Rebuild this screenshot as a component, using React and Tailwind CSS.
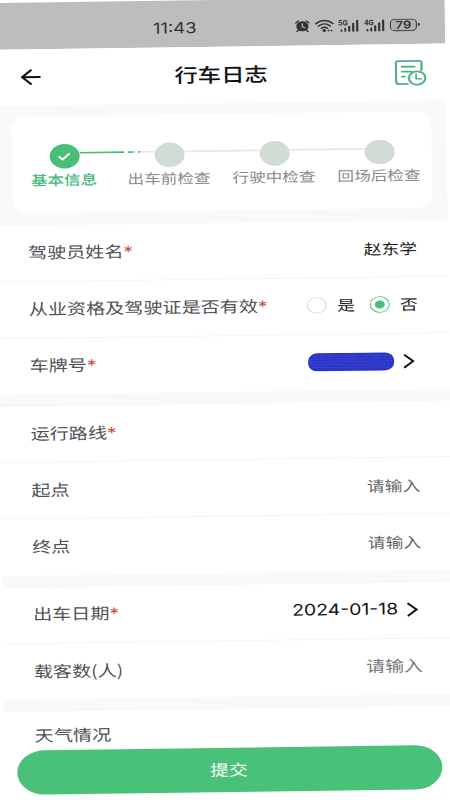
import React, { useState } from 'react';

const steps = ['基本信息', '出车前检查', '行驶中检查', '回场后检查'];

const Chevron = () => (
  <svg width="11" height="19" viewBox="0 0 11 19" fill="none" stroke="#111" strokeWidth="2.2">
    <path d="M0.500 1.5 9.5 9.5 0.500 17.5" />
  </svg>
);

const Signal = ({ label }) => (
  <svg width="21" height="17" viewBox="0 0 21 17" fill="#333">
    <text x="0" y="8.2" fontSize="9" fontWeight="700" fontFamily="Inter, sans-serif" textLength="10" lengthAdjust="spacingAndGlyphs">
      {label}
    </text>
    <rect x="2.5" y="13" width="2" height="3" rx="1" />
    <rect x="6.3" y="11" width="2" height="5" rx="1" />
    <rect x="10.2" y="8.500" width="2.2" height="7.5" rx="1" />
    <rect x="14.2" y="5" width="2.2" height="11" rx="1" />
    <rect x="18.2" y="1.5" width="2.2" height="14.5" rx="1" />
  </svg>
);

const StatusBar = () => (
  <div className="flex h-[57px] items-center bg-[#bdbdbd] pt-[9px] pl-[158px] pr-[25px] text-[#333]">
    <span className="font-[Inter] text-[18.5px] leading-none">11:43</span>
    <div className="ml-auto flex items-center">
      <svg width="15" height="16" viewBox="0 0 15 16" fill="none" stroke="#333" strokeWidth="1.5" strokeLinecap="round">
        <circle cx="7.5" cy="8.5" r="5.4" fill="#333" />
        <path d="M1 4.5 3.5 2M14 4.5 11.5 2M3.5 13 2 15M11.5 13 13 15" />
        <path d="M7.5 5.5V9l2.3 1.5" stroke="#bdbdbd" strokeWidth="1.3" />
      </svg>
      <svg className="ml-[5px]" width="19" height="16" viewBox="0 0 19 16" fill="none" stroke="#333" strokeWidth="1.7" strokeLinecap="round">
        <path d="M1 5.5c5-5 12-5 17 0M3.7 8.5c3.5-3.4 8.1-3.4 11.6 0M6.5 11.3c2-1.8 4-1.8 6 0" />
        <circle cx="9.2" cy="14" r="1" fill="#333" />
        <path d="M13.5 14.2h.1M16.5 14.2h.1" strokeWidth="2" />
      </svg>
      <div className="ml-[4px]"><Signal label="5G" /></div>
      <div className="ml-[5px]"><Signal label="4G" /></div>
      <div className="ml-[5px] flex h-[15px] w-[27px] items-center justify-center rounded-[5px] border border-[#333] bg-[#b0b0b0] font-[Inter] text-[13px] font-semibold leading-none">
        79
      </div>
      <div className="ml-[1px] h-[4px] w-[2px] rounded-r bg-[#333]" />
    </div>
  </div>
);

const Header = () => (
  <div className="flex h-[69px] items-center justify-between bg-white pl-[25px] pr-[19px]">
    <button className="w-[31px] pb-[1px]">
      <svg width="21" height="20" viewBox="0 0 21 20" fill="none" stroke="#111" strokeWidth="2.2">
        <path d="M20 10H1.5M11 1 1.5 10 11 19" />
      </svg>
    </button>
    <h1 className="pr-[4px] pb-[2px] text-[23.3px] font-medium leading-none text-[#111]">行车日志</h1>
    <button>
      <svg width="32" height="32" viewBox="0 0 32 32" fill="none" stroke="#4fb380" strokeWidth="2.2" strokeLinecap="round" strokeLinejoin="round">
        <path d="M27 13V3.5Q27 1.5 25 1.5H3.5Q1.5 1.5 1.5 3.5V27Q1.5 29.5 4 29.5H13" />
        <path d="M7.5 8.5H20M7.5 14.5H17M7.5 20.5H10" />
        <circle cx="22.5" cy="22.5" r="8.2" />
        <path d="M21.5 18V23.5H26.5" strokeWidth="1.8" />
      </svg>
    </button>
  </div>
);

const Stepper = () => (
  <div className="mx-[15px] flex h-[118px] rounded-[16px] bg-white pt-[34px]">
    {steps.map((step, i) => (
      <div key={step} className="flex w-[105px] flex-col items-center">
        <div className="flex w-full items-center">
          <div className="mb-[8px] flex w-[37.5px] justify-end">
            {i > 0 && <div className={`h-[2px] bg-[#e6e8e7] ${i === 1 ? 'w-[13px]' : 'w-full'}`} />}
          </div>
          <div className={`flex size-[30px] shrink-0 items-center justify-center rounded-full ${i === 0 ? 'bg-[#49be78]' : 'bg-[#d1dcd4]'}`}>
            {i === 0 && (
              <svg width="13" height="11" viewBox="0 0 13 11" fill="none" stroke="#fff" strokeWidth="2.2">
                <path d="M1 5 5 9 12 1.5" />
              </svg>
            )}
          </div>
          <div className="mb-[8px] flex w-[37.5px] gap-[3px]">
            {i === 0 && (
              <>
                <div className="h-[2.6px] w-[45px] shrink-0 rounded-r bg-[#49be78]" />
                <div className="h-[2.6px] w-[7px] shrink-0 rounded bg-[#49be78]" />
                <div className="h-[2.6px] w-[3px] shrink-0 rounded bg-[#49be78]" />
              </>
            )}
            {(i === 1 || i === 2) && <div className="h-[2px] w-full bg-[#e6e8e7]" />}
          </div>
        </div>
        <span className={`mt-px -ml-[1px] whitespace-nowrap text-[16.6px] leading-[24px] ${i === 0 ? 'font-medium text-[#49b878]' : 'text-[#8a8a8a]'}`}>
          {step}
        </span>
      </div>
    ))}
  </div>
);

const Row = ({ label, required, children, className = 'pr-[31px]' }) => (
  <div className={`flex h-[68.8px] items-center justify-between border-b border-[#f3f3f3] pl-[30px] pb-[1px] last:border-b-0 ${className}`}>
    <label className="flex whitespace-nowrap text-[19.1px] leading-none text-[#505257]">
      {label}
      {required && <span className="pt-[1px] font-[Inter] text-[19px] leading-none text-[#d0493e]">*</span>}
    </label>
    <div className="flex items-center text-[17.8px] leading-none text-[#1c1c1c]">{children}</div>
  </div>
);

const Radio = ({ checked, onClick }) => (
  <button
    onClick={onClick}
    className={`flex size-[20px] items-center justify-center rounded-full border ${checked ? 'border-[#49be78]' : 'border-[#d6d6d6]'}`}
  >
    {checked && <span className="size-[10px] rounded-full bg-[#49be78]" />}
  </button>
);

const Divider = () => <div className="h-[14px] border-b border-[#f5f5f5] bg-[#f9f9f9]" />;

const App = () => {
  const [valid, setValid] = useState(false);

  return (
    <div className="h-[800px] w-[450px] overflow-hidden bg-white font-['Noto_Sans_CJK_SC',sans-serif]">
      <div className="w-[450px] origin-top-left bg-white [transform:matrix(1,-0.0136,0.0115,0.82,-5.5,3)]">
        <StatusBar />
        <Header />

        <div className="bg-[#f9f9f9] pt-[13px] pb-[15px]">
          <Stepper />
        </div>

        <section>
          <Row label="驾驶员姓名" required>赵东学</Row>
          <Row label="从业资格及驾驶证是否有效" required>
            <Radio checked={valid} onClick={() => setValid(true)} />
            <span className="ml-[10px] mr-[15px]">是</span>
            <Radio checked={!valid} onClick={() => setValid(false)} />
            <span className="ml-[10px]">否</span>
          </Row>
          <Row label="车牌号" required className="pr-[35px]">
            <svg className="mr-[9px]" width="87" height="23" viewBox="0 0 87 23">
              <rect x="0.5" y="0.5" width="86" height="22" rx="9.5" fill="#2b36c9" />
              <path
                d="M6 4H80M3 7.500H84M2 11H85M3 14.500H84M5 18H81"
                stroke="#4650d8"
                strokeWidth="1"
                strokeDasharray="2 1.500"
              />
            </svg>
            <Chevron />
          </Row>
        </section>

        <Divider />

        <section>
          <Row label="运行路线" required />
          <Row label="起点"><span className="text-[#666]">请输入</span></Row>
          <Row label="终点"><span className="text-[#666]">请输入</span></Row>
        </section>

        <Divider />

        <section>
          <Row label="出车日期" required className="pr-[35px]">
            <span className="mr-[9px] font-[Inter] text-[19.4px] text-[#111]">2024-01-18</span>
            <Chevron />
          </Row>
          <Row label="载客数(人)"><span className="pb-[2px] text-[18.9px] text-[#777]">请输入</span></Row>
        </section>

        <Divider />

        <div className="flex h-[48px] items-center pt-[10px] pl-[30px] text-[19.1px] leading-none text-[#505257]">
          天气情况
        </div>
        <button className="mx-[12px] flex h-[54px] w-[425px] items-center justify-center rounded-full bg-[#4ac179] pb-[2px] pr-[2px] text-[18.7px] leading-none text-white">
          提交
        </button>
      </div>
    </div>
  );
};

export default App;
